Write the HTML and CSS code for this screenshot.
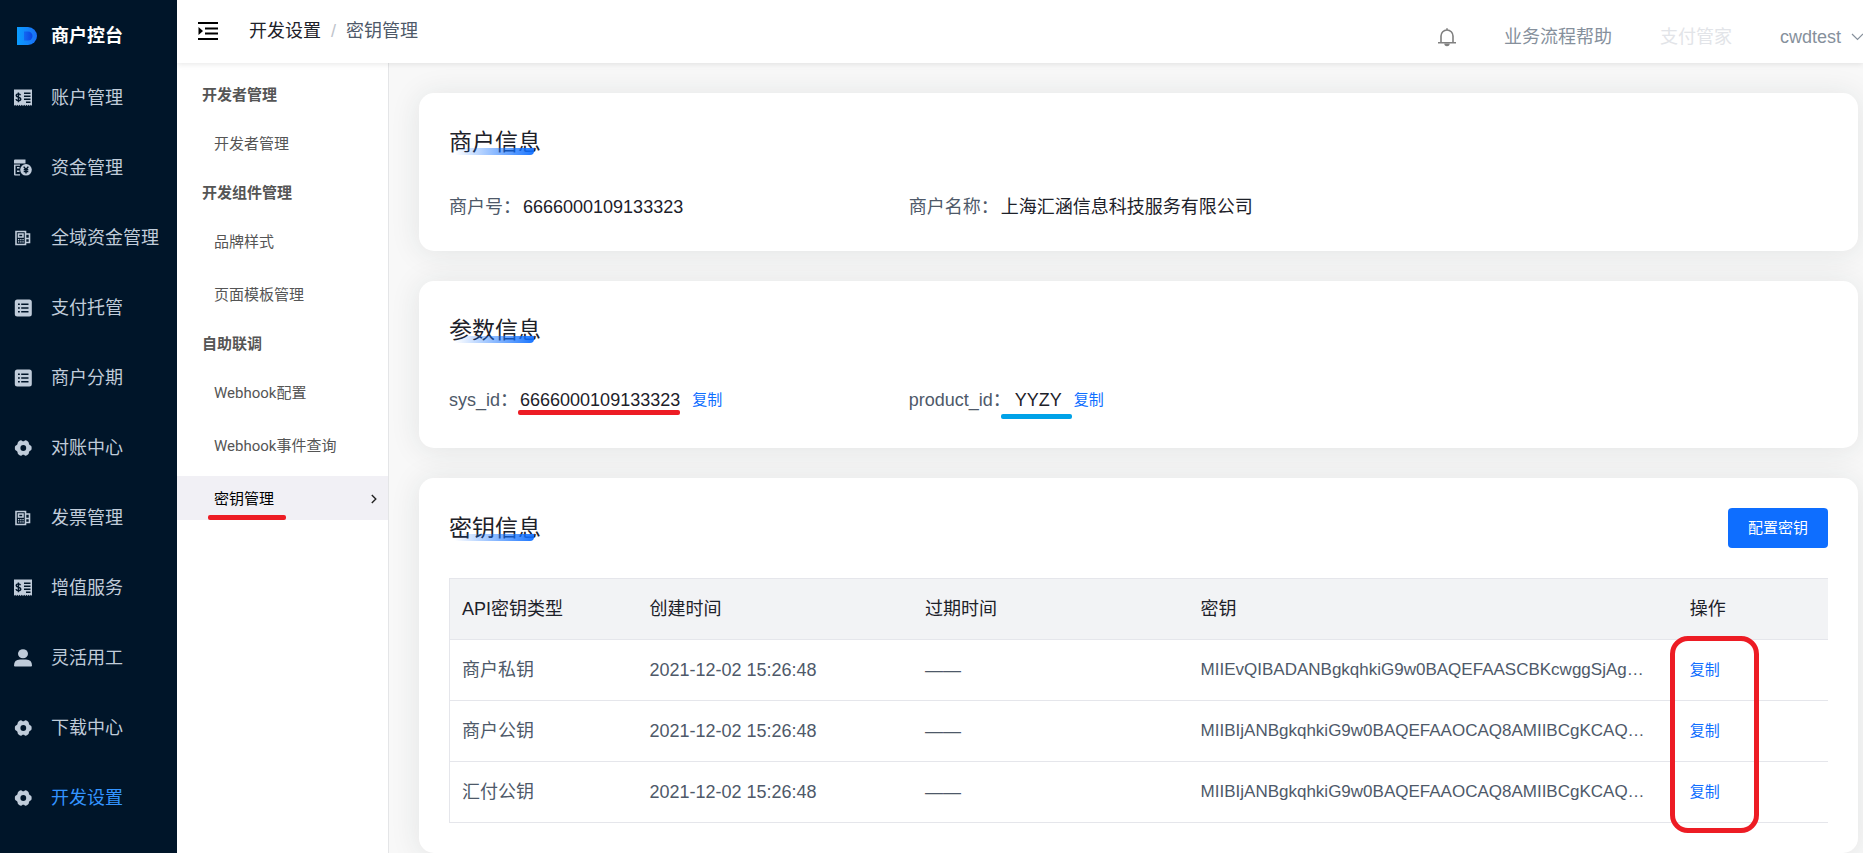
FILE: index.html
```html
<!DOCTYPE html>
<html lang="zh-CN">
<head>
<meta charset="utf-8">
<title>商户控台 - 密钥管理</title>
<link rel="stylesheet" href="styles.css">
</head>
<body>
<svg class="defs" aria-hidden="true">
  <symbol id="i-bill" viewBox="0 0 18 18">
    <path fill="currentColor" d="M0 .5h18V17l-1.1-1.3L15.800 17l-1.100-1.300L13.600 17l-1.100-1.300L11.400 17l-1.200-1.300L9 17l-1.200-1.300L6.600 17l-1.100-1.300L4.400 17l-1.100-1.300L2.200 17l-1.100-1.300L0 17z"/>
    <path class="ink" d="M6.500 6.200C6.200 5.200 5.300 4.900 4.400 4.900 3.200 4.900 2.200 5.500 2.200 6.500c0 2.300 4.600 1.100 4.600 3.500 0 1.100-1.100 1.700-2.400 1.700-1.200 0-2.200-.5-2.500-1.600M4.400 3.400v9.800M10 4.200h6.500M10 7.200h6.500M10 10.200h6.500M12 13.200h4.500"/>
  </symbol>
  <symbol id="i-fund" viewBox="0 0 18 18">
    <path fill="currentColor" d="M0 1.500Q0 .5 1 .5h10.500v4H0zM0 5.500h6v1.200H1.500v8.600H6v1.200H1q-1 0-1-1zM3 8h2.500v1.500H3zM3 11.500h2.500V13H3z"/>
    <circle cx="12" cy="10.800" r="5.800" fill="currentColor"/>
    <path class="ink" d="M9.700 7.600 12 10.500l2.300-2.900M12 10.500v4M9.700 10.600h4.600M9.700 12.500h4.600"/>
  </symbol>
  <symbol id="i-pos" viewBox="0 0 18 18">
    <path fill="none" stroke="currentColor" stroke-width="1.600" d="M2 2.500h9.500v13H2zM12 5h3.500v8.500H12M4.500 5h4.500v3H4.500zM12 9.500h3.500"/>
    <path fill="currentColor" d="M4 10h1.300v1.300H4zM6.200 10h1.300v1.300H6.200zM8.400 10h1.300v1.300H8.400zM4 12.300h1.300v1.300H4zM6.200 12.300h1.300v1.300H6.200zM8.400 12.300h1.300v1.300H8.400z"/>
  </symbol>
  <symbol id="i-list" viewBox="0 0 18 18">
    <rect x=".8" y=".5" width="17" height="17" rx="2.500" fill="currentColor"/>
    <path class="ink" d="M4 5.200h1.800M7.200 5.200h7.300M4 9h1.800M7.200 9h7.300M4 12.800h1.800M7.200 12.800h7.300"/>
  </symbol>
  <symbol id="i-gear" viewBox="0 0 18 18">
    <path fill="currentColor" fill-rule="evenodd" d="M5.500 1.800Q6.600 1 7.700 1.600l.8.600q.8.300 1.500 0l.8-.6q1.100-.6 2.200.2l1.200.9q.8.800.7 1.900 0 1 .8 1.400 1.600.5 1.900 1.800V10.200q-.3 1.300-1.900 1.800-.8.500-.8 1.500.1 1-.7 1.800l-1.200.9q-1.100.8-2.200.2l-.8-.6q-.7-.3-1.500 0l-.8.600q-1.100.6-2.200-.2l-1.200-.9q-.8-.8-.7-1.800 0-1-.8-1.500-1.600-.5-1.900-1.800V7.800Q1.200 6.500 2.800 6q.8-.4.8-1.400-.1-1.100.7-1.900zM9.300 6.100a2.900 2.900 0 1 0 0 5.800 2.900 2.900 0 0 0 0-5.800z"/>
  </symbol>
  <symbol id="i-user" viewBox="0 0 18 18">
    <ellipse cx="9" cy="4.800" rx="5" ry="4.500" fill="currentColor"/>
    <path fill="currentColor" d="M0 16.500Q0 10.500 6 10.500h6q6 0 6 6 0 1-1 1H1q-1 0-1-1z"/>
  </symbol>
</svg>

<div class="app">
  <aside class="sidebar">
    <div class="brand">
      <svg class="logo" viewBox="0 0 20 18" aria-hidden="true">
        <defs>
          <linearGradient id="g1"><stop offset="0" stop-color="#0a9dff"/><stop offset="1" stop-color="#1b6ef5"/></linearGradient>
          <linearGradient id="g2"><stop offset="0" stop-color="#1268f2"/><stop offset="1" stop-color="#0b45e0"/></linearGradient>
        </defs>
        <path fill="url(#g1)" d="M0 0h11a9 9 0 0 1 0 18H0z"/>
        <path fill="url(#g2)" d="M7 4.500h4a4.500 4.500 0 0 1 0 9H7z"/>
      </svg>
      <span>商户控台</span>
    </div>
    <nav class="menu">
      <a href="#"><svg><use href="#i-bill"/></svg>账户管理</a>
      <a href="#"><svg><use href="#i-fund"/></svg>资金管理</a>
      <a href="#"><svg><use href="#i-pos"/></svg>全域资金管理</a>
      <a href="#"><svg><use href="#i-list"/></svg>支付托管</a>
      <a href="#"><svg><use href="#i-list"/></svg>商户分期</a>
      <a href="#"><svg><use href="#i-gear"/></svg>对账中心</a>
      <a href="#"><svg><use href="#i-pos"/></svg>发票管理</a>
      <a href="#"><svg><use href="#i-bill"/></svg>增值服务</a>
      <a href="#"><svg><use href="#i-user"/></svg>灵活用工</a>
      <a href="#"><svg><use href="#i-gear"/></svg>下载中心</a>
      <a href="#" class="active"><svg><use href="#i-gear"/></svg>开发设置</a>
    </nav>
  </aside>

  <div class="page">
    <header class="topbar">
      <div class="crumbs">
        <button class="fold" aria-label="收起菜单">
          <svg viewBox="0 0 20 18"><path d="M0 1h20M7 6.500h13M7 11.500h13M0 17h20" stroke="#000" stroke-width="2"/><path d="M.5 5v8L5 9z"/></svg>
        </button>
        <a href="#">开发设置</a>
        <span class="slash">/</span>
        <span class="here">密钥管理</span>
      </div>
      <div class="tools">
        <button class="bell" aria-label="通知">
          <svg viewBox="0 0 18 19"><path d="M3 14.500V8a6 6 0 0 1 12 0v6.500M0 14.800h18M9 .3V2" fill="none" stroke="#808080" stroke-width="1.600"/><path d="M6.300 15.500h5.400a2.700 2.700 0 0 1-5.400 0z" fill="#808080"/></svg>
        </button>
        <a href="#">业务流程帮助</a>
        <span class="off">支付管家</span>
        <button class="user">cwdtest
          <svg viewBox="0 0 12 8"><path d="M1 1l5.500 5.500L12 1" fill="none" stroke="#86909c" stroke-width="1.200"/></svg>
        </button>
      </div>
    </header>

    <div class="body">
      <nav class="submenu">
        <h3>开发者管理</h3>
        <ul>
          <li><a href="#">开发者管理</a></li>
        </ul>
        <h3>开发组件管理</h3>
        <ul>
          <li><a href="#">品牌样式</a></li>
          <li><a href="#">页面模板管理</a></li>
        </ul>
        <h3>自助联调</h3>
        <ul>
          <li><a href="#">Webhook配置</a></li>
          <li><a href="#">Webhook事件查询</a></li>
          <li><a href="#" class="current">密钥管理
            <svg viewBox="0 0 6 10"><path d="M.8 1l4 4-4 4" fill="none" stroke="#222" stroke-width="1.400"/></svg></a></li>
        </ul>
      </nav>

      <main class="content">
        <section class="card">
          <h2 class="title">商户信息</h2>
          <dl class="fields">
            <div><dt>商户号：</dt><dd>6666000109133323</dd></div>
            <div><dt>商户名称：</dt><dd>上海汇涵信息科技服务有限公司</dd></div>
          </dl>
        </section>

        <section class="card">
          <h2 class="title">参数信息</h2>
          <dl class="fields tall">
            <div><dt>sys_id：</dt><dd class="mark-red">6666000109133323</dd><dd><button class="link">复制</button></dd></div>
            <div><dt>product_id：</dt><dd class="mark-blue">YYZY</dd><dd><button class="link">复制</button></dd></div>
          </dl>
        </section>

        <section class="card">
          <div class="card-head">
            <h2 class="title">密钥信息</h2>
            <button class="primary">配置密钥</button>
          </div>
          <div class="table-wrap">
            <table>
              <colgroup><col class="c-type"><col class="c-time"><col class="c-time"><col class="c-key"><col></colgroup>
              <thead>
                <tr><th>API密钥类型</th><th>创建时间</th><th>过期时间</th><th>密钥</th><th>操作</th></tr>
              </thead>
              <tbody>
                <tr><td>商户私钥</td><td>2021-12-02 15:26:48</td><td>——</td><td class="key">MIIEvQIBADANBgkqhkiG9w0BAQEFAASCBKcwggSjAg…</td><td><button class="link">复制</button></td></tr>
                <tr><td>商户公钥</td><td>2021-12-02 15:26:48</td><td>——</td><td class="key">MIIBIjANBgkqhkiG9w0BAQEFAAOCAQ8AMIIBCgKCAQ…</td><td><button class="link">复制</button></td></tr>
                <tr><td>汇付公钥</td><td>2021-12-02 15:26:48</td><td>——</td><td class="key">MIIBIjANBgkqhkiG9w0BAQEFAAOCAQ8AMIIBCgKCAQ…</td><td><button class="link">复制</button></td></tr>
              </tbody>
            </table>
            <span class="callout"></span>
          </div>
        </section>
      </main>
    </div>
  </div>
</div>
</body>
</html>
```
FILE: styles.css
```css
* { box-sizing: border-box; }

body {
  margin: 0;
  overflow: hidden;
  font: 18px/24px "Liberation Sans", "Noto Sans CJK SC", sans-serif;
  color: #1d2129;
}

a { color: inherit; text-decoration: none; }
button { padding: 0; border: 0; background: none; font: inherit; color: inherit; cursor: pointer; }
h2, h3, ul, dl, dd { margin: 0; padding: 0; }
ul { list-style: none; }
svg { display: block; flex: none; }
.defs { position: absolute; width: 0; height: 0; }
.ink { fill: none; stroke: #001529; stroke-width: 1.4; }

.app { display: flex; height: 100vh; }

/* Primary navigation */
.sidebar { flex: none; width: 177px; background: #001529; color: #c0ccda; }
.brand {
  display: flex;
  align-items: center;
  gap: 14px;
  height: 63px;
  padding: 8px 0 0 17px;
  font-weight: 700;
  color: #fff;
}
.logo { width: 20px; height: 18px; }
.menu a {
  display: flex;
  align-items: center;
  gap: 19px;
  height: 70px;
  padding-left: 14px;
  white-space: nowrap;
}
.menu svg { width: 18px; height: 18px; color: #c0ccda; }
.menu .active { color: #3394ff; }

.page { display: flex; flex: 1; flex-direction: column; min-width: 0; }

/* Top bar */
.topbar {
  position: relative;
  z-index: 1;
  display: flex;
  flex: none;
  justify-content: space-between;
  height: 63px;
  background: #fff;
  box-shadow: 0 1px 6px rgba(0, 0, 0, .1);
}
.crumbs { display: flex; align-items: center; height: 61px; padding-left: 21px; }
.fold { margin-right: 31px; }
.fold svg { width: 20px; height: 18px; }
.slash { margin: 0 10px; color: #c0c4cc; }
.here { color: #4e5969; }
.tools { display: flex; align-items: center; gap: 48px; padding-top: 11px; color: #86909c; }
.bell svg { width: 18px; height: 19px; }
.off { color: #e2e4e8; }
.user { display: flex; align-items: center; gap: 10px; }
.user svg { width: 12px; height: 8px; }

.body { display: flex; flex: 1; min-height: 0; }

/* Section navigation */
.submenu {
  flex: none;
  width: 212px;
  padding-top: 4px;
  border-right: 1px solid #e4e5e7;
  background: #fff;
  font: 15px/20px Roboto, "Noto Sans CJK SC", sans-serif;
  color: #555;
}
.submenu h3 { padding: 18px 0 16px 25px; font-size: 15px; font-weight: 700; }
.submenu ul { display: grid; gap: 9px; }
.submenu a {
  display: flex;
  align-items: center;
  justify-content: space-between;
  height: 44px;
  padding: 2px 11px 0 37px;
}
.submenu svg { width: 6px; height: 10px; }
.submenu .current { position: relative; background: #f1f0f5; color: #000; }
.submenu .current::after {
  content: "";
  position: absolute;
  left: 31px;
  bottom: 0;
  width: 78px;
  height: 5px;
  border-radius: 2px;
  background: #ed1c24;
}

/* Cards */
.content {
  display: flex;
  flex: 1;
  flex-direction: column;
  gap: 30px;
  min-width: 0;
  padding: 30px 5px 30px 30px;
  background: #f8f8f8;
}
.card {
  flex: none;
  padding: 30px 30px 32px;
  border-radius: 15px;
  background: #fff;
  box-shadow: 0 2px 30px rgba(30, 45, 50, .1);
}
.card:last-child { padding-bottom: 30px; }
.title {
  position: relative;
  width: max-content;
  font-size: 23px;
  font-weight: 400;
  line-height: 38px;
}
.title::after {
  content: "";
  position: absolute;
  left: 6px;
  right: 7px;
  bottom: 6px;
  height: 7px;
  border-radius: 0 0 4px 0;
  background: linear-gradient(90deg, rgba(14, 110, 255, 0), rgba(14, 110, 255, .95));
}
.fields { display: grid; grid-template-columns: repeat(3, 1fr); margin-top: 34px; }
.fields > div { display: flex; align-items: center; }
.fields dt { margin-right: 2px; color: #4e5969; }
.tall > div { height: 33px; }
.link { display: block; font-size: 15px; line-height: 24px; color: #0e6eff; }
.mark-red, .mark-blue { position: relative; margin-right: 12px; }
.mark-red::after, .mark-blue::after {
  content: "";
  position: absolute;
  height: 5px;
  border-radius: 2px;
}
.mark-red::after { left: -2px; right: 0; bottom: -3px; background: #ed1c24; }
.mark-blue { margin-left: 2px; }
.mark-blue::after { left: -14px; right: -10px; bottom: -7px; background: #00a2e8; }

.card-head { display: flex; align-items: center; justify-content: space-between; margin-bottom: 30px; }
.primary { width: 100px; height: 40px; border-radius: 4px; background: #0e6eff; font-size: 15px; color: #fff; }

/* Key table */
.table-wrap { position: relative; }
table {
  width: 100%;
  table-layout: fixed;
  border-collapse: separate;
  border-spacing: 0;
  border: solid #e5e6eb;
  border-width: 1px 0 0 1px;
}
.c-type { width: 13.6%; }
.c-time { width: 20%; }
.c-key { width: 35.5%; }
th, td {
  padding: 18px 0 18px 12px;
  border-bottom: 1px solid #e5e6eb;
  font-weight: 400;
  text-align: left;
  white-space: nowrap;
}
th { background: #f2f3f5; }
td { color: #4e5969; }
.key { font-size: 17px; }
.callout {
  position: absolute;
  top: 58px;
  right: 69px;
  width: 89px;
  height: 197px;
  border: 5px solid #ed1c24;
  border-radius: 18px;
  pointer-events: none;
}
```
